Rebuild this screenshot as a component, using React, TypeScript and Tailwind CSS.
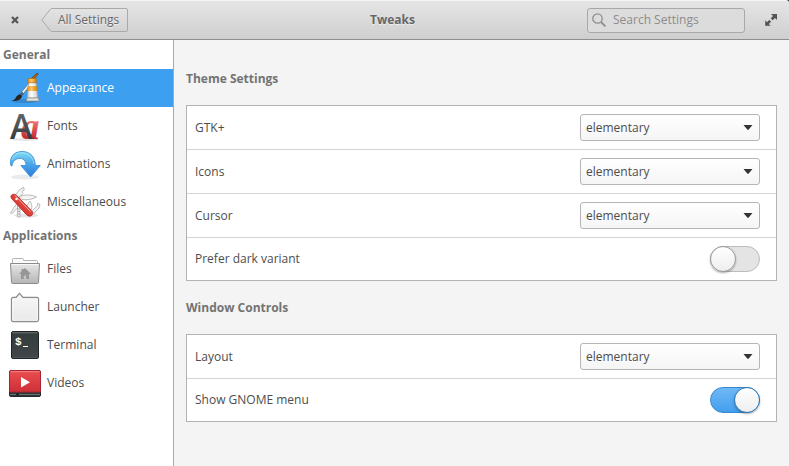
import { useState } from "react";
import type { ReactNode } from "react";

const CHOICES = ["elementary", "Adwaita", "HighContrast"];

function AppearanceIcon() {
  return (
    <svg viewBox="0 0 32 32" className="size-8">
      <defs>
        <linearGradient id="tube" x1="0" x2="1">
          <stop offset="0" stopColor="#d5d5d2" />
          <stop offset="0.4" stopColor="#ffffff" />
          <stop offset="1" stopColor="#c9c9c6" />
        </linearGradient>
        <linearGradient id="cap" x1="0" x2="1">
          <stop offset="0" stopColor="#e08f22" />
          <stop offset="0.4" stopColor="#ffc96b" />
          <stop offset="1" stopColor="#d6800f" />
        </linearGradient>
      </defs>
      <ellipse cx="16" cy="29" rx="14" ry="2" fill="#245f96" opacity="0.35" />
      <path d="M22 7 26.5 2.3q2-1.6 2.3-.8.2.8-.8 2L24 8z" fill="#b76a12" stroke="#6d3c09" strokeWidth="0.9" />
      <path d="m12.5 20 8-9.500 1.500 1.500-7.500 9.500z" fill="#f1f1ef" stroke="#666" strokeWidth="0.7" />
      <path d="M2.500 28.800c4-.5 3.500-3.300 6-5.300l2.500-1.500 2.200 2-1.200 2.200c-1.800 2.300-5 3.100-9.500 2.600z" fill="#29231f" />
      <path d="m11 21.800 2-1.800 2 1.800-1.700 2z" fill="#57616b" />
      <path d="M19.500 10.500h7.500l1.800 15.500h-10.300z" fill="url(#tube)" stroke="#a3a3a0" strokeWidth="0.7" />
      <path d="M18.700 14h9l.6 5h-10z" fill="url(#cap)" />
      <path d="M19 6.500h8.300v4.300h-8.300z" fill="url(#cap)" stroke="#b36a0c" strokeWidth="0.6" />
      <path d="M18 26h11.500l.7 3H17.300z" fill="#e5e5e3" stroke="#858582" strokeWidth="0.7" />
    </svg>
  );
}

function FontsIcon() {
  return (
    <svg viewBox="0 0 32 32" className="size-8 overflow-visible">
      <defs>
        <linearGradient id="script" x1="0" y1="0" x2="0" y2="1">
          <stop offset="0.3" stopColor="#f4827a" />
          <stop offset="0.8" stopColor="#c4282d" />
        </linearGradient>
        <linearGradient id="caps" x1="0" y1="0" x2="0" y2="1">
          <stop offset="0.2" stopColor="#64686a" />
          <stop offset="0.8" stopColor="#34383a" />
        </linearGradient>
      </defs>
      <ellipse cx="16" cy="29.500" rx="14" ry="1.500" fill="#000" opacity="0.1" />
      <text x="12" y="29" fontSize="37" className="font-['Liberation_Serif',serif] font-bold italic" fill="url(#script)">
        a
      </text>
      <text x="1" y="29" fontSize="34" className="font-['Open_Sans',sans-serif] font-semibold" fill="url(#caps)">
        A
      </text>
    </svg>
  );
}

function AnimationsIcon() {
  return (
    <svg viewBox="0 0 32 32" className="size-8">
      <defs>
        <linearGradient id="arrow" x1="0" y1="0" x2="0" y2="1">
          <stop offset="0" stopColor="#80dcf2" />
          <stop offset="0.5" stopColor="#4aa5ea" />
          <stop offset="1" stopColor="#2e78dc" />
        </linearGradient>
      </defs>
      <ellipse cx="16" cy="29" rx="14" ry="2.500" fill="#000" opacity="0.08" />
      <path
        d="M1.500 16.500C.5 8 6 3.500 13 3.500c8.500 0 13 5.500 13.300 14h5L21.600 29 11.800 17.500H17C17 12.500 14 10 10 10.500 6 11 3.500 13.500 3 18c-1 0-1.300-.7-1.500-1.500z"
        fill="url(#arrow)"
        stroke="#3f93d6"
        strokeWidth="0.9"
        strokeLinejoin="round"
      />
      <path d="M3 12C5 6.500 9 4.800 13 4.800c6.500 0 11 4 11.800 11" fill="none" stroke="#b5edfa" opacity="0.6" />
    </svg>
  );
}

function MiscellaneousIcon() {
  return (
    <svg viewBox="0 0 32 32" className="size-8">
      <defs>
        <linearGradient id="knife" x1="1" y1="0" x2="0" y2="1">
          <stop offset="0" stopColor="#f9857a" />
          <stop offset="0.5" stopColor="#df4038" />
          <stop offset="1" stopColor="#b72420" />
        </linearGradient>
      </defs>
      <ellipse cx="17" cy="29.500" rx="12" ry="2" fill="#000" opacity="0.1" />
      <g fill="#f4f4f4" stroke="#ababab" strokeWidth="0.8" strokeLinejoin="round">
        <path d="M5.500 10.500 10 4.200l4.500-3 .8 2.800-2 1 .5 2.500-5 6z" />
        <path d="M10 10.500c5-1.800 12-2.300 17.500.5-4 2.500-10 3.200-14.500 2.500z" />
        <path d="m8 17-6.500 10 1.800.5L11 19z" />
        <path d="M8.500 18.500v12.500h2.500V20z" />
        <path d="M19 23c-1.500-3 0-6 2-8 2 3 2.500 6 1 9z" />
        <path d="M23 25.500c1-3.500 6.500-4 5.500-8l2 .5c1.500 5-3.500 5-5 9.500z" />
      </g>
      <path d="M8.500 23h2.500M8.500 25.500h2.500M8.500 28h2.500" stroke="#999" strokeWidth="0.8" />
      <path
        d="M3 13c-1.500-2-1.500-3.500.2-4.300 1.500-.7 3-.5 4.500.8l15 15.500c1.500 2 1.300 3.500 0 4.500-1.500 1-3.500.8-5-.6z"
        fill="url(#knife)"
        stroke="#a92522"
        strokeWidth="0.8"
      />
      <path d="m6 9.500 15.500 16" stroke="#ffa59b" fill="none" />
      <circle cx="7.500" cy="13" r="1.300" fill="#eee" />
    </svg>
  );
}

function FilesIcon() {
  return (
    <svg viewBox="0 0 32 32" className="size-8">
      <defs>
        <linearGradient id="folder" x1="0" y1="0" x2="0" y2="1">
          <stop offset="0" stopColor="#e6e6e6" />
          <stop offset="1" stopColor="#b5b5b5" />
        </linearGradient>
      </defs>
      <path d="M3.500 12V6.500q0-1 1-1h9q1 0 1 1v1h13q1 0 1 1V12z" fill="#fafafa" stroke="#b3b3b3" />
      <path d="M1.500 10.500h29L29.500 29.500q0 1-1 1h-25q-1 0-1-1z" fill="url(#folder)" stroke="#8b8b8b" />
      <path d="M2.500 11.500h27" stroke="#f6f6f6" />
      <path d="m16 15 6 6h-2v5h-2.800v-3.500h-2.400V26H12v-5h-2l2.500-2.500V16h2v.5z" fill="#969696" />
    </svg>
  );
}

function LauncherIcon() {
  return (
    <svg viewBox="0 0 32 32" className="size-8">
      <defs>
        <linearGradient id="popover" x1="0" y1="0" x2="0" y2="1">
          <stop offset="0" stopColor="#f7f7f7" />
          <stop offset="1" stopColor="#e9e9e9" />
        </linearGradient>
      </defs>
      <path
        d="M4 6.500H7L10.500 2.300 14 6.500H28q1.500 0 1.500 1.500V29q0 1.500-1.500 1.500H4q-1.500 0-1.500-1.500V8q0-1.500 1.500-1.500z"
        fill="url(#popover)"
        stroke="#8d8d8d"
        strokeWidth="1.300"
        strokeLinejoin="round"
      />
      <path d="M3.700 29.300V7.800h4L10.500 4.300l3 3.500h14.800v21.500z" fill="none" stroke="#fff" opacity="0.8" />
    </svg>
  );
}

function TerminalIcon() {
  return (
    <svg viewBox="0 0 32 32" className="size-8">
      <defs>
        <linearGradient id="screen" x1="0" y1="0" x2="0" y2="1">
          <stop offset="0" stopColor="#343b3d" />
          <stop offset="1" stopColor="#414749" />
        </linearGradient>
      </defs>
      <rect x="2.500" y="2.500" width="27" height="27" rx="1.500" fill="url(#screen)" stroke="#1f2425" />
      <path d="M3.500 3.800h25" stroke="#6e7577" />
      <path d="M3.500 28.500h25" stroke="#565d5f" opacity="0.7" />
      <text x="6" y="16" fontSize="11" className="font-['Liberation_Mono',monospace] font-bold" fill="#fff">
        $
      </text>
      <path d="M14 17.500h5" stroke="#fff" />
    </svg>
  );
}

function VideosIcon() {
  return (
    <svg viewBox="0 0 32 32" className="size-8">
      <defs>
        <linearGradient id="video" x1="0" y1="0" x2="0" y2="1">
          <stop offset="0" stopColor="#e94e50" />
          <stop offset="1" stopColor="#cf2f38" />
        </linearGradient>
      </defs>
      <rect x="0.5" y="3.500" width="31" height="26" rx="1.500" fill="#303638" stroke="#25282a" />
      <path d="M.5 25V5q0-1.500 1.500-1.500h28q1.500 0 1.500 1.500v20z" fill="url(#video)" stroke="#a52630" />
      <path d="M1.500 4.700h29" stroke="#f38382" />
      <path d="M12 10v10.500l9-5.250z" fill="#fff" />
      <path d="M1 27.500h30" stroke="#6a7072" />
      <circle cx="8.500" cy="27.500" r="1.200" fill="#15191a" />
    </svg>
  );
}

const sections = [
  {
    title: "General",
    items: [
      { name: "Appearance", icon: <AppearanceIcon /> },
      { name: "Fonts", icon: <FontsIcon /> },
      { name: "Animations", icon: <AnimationsIcon /> },
      { name: "Miscellaneous", icon: <MiscellaneousIcon /> },
    ],
  },
  {
    title: "Applications",
    items: [
      { name: "Files", icon: <FilesIcon /> },
      { name: "Launcher", icon: <LauncherIcon /> },
      { name: "Terminal", icon: <TerminalIcon /> },
      { name: "Videos", icon: <VideosIcon /> },
    ],
  },
];

function Header() {
  return (
    <header className="bg-[#333]">
      <div className="grid h-10 grid-cols-[1fr_auto_1fr] items-center rounded-tr-[3px] border-t border-b border-t-[#f4f4f4] border-b-[#8e8e8e] bg-linear-to-b from-[#e5e5e5] to-[#cfcfcf] pr-3 pl-2">
        <div className="flex items-center gap-[19px]">
          <button type="button" aria-label="Close" className="flex size-3.5 items-center justify-center">
            <svg viewBox="0 0 8 8" className="size-2">
              <path d="m1 1 6 6M7 1 1 7" stroke="#555" strokeWidth="2.200" />
            </svg>
          </button>
          <button type="button" className="relative h-6 w-[87px] pl-[17px] text-left text-[#666] [text-shadow:0_1px_#eee]">
            <svg viewBox="0 0 87 24" className="absolute inset-0 size-full">
              <defs>
                <linearGradient id="back" x1="0" y1="0" x2="0" y2="1">
                  <stop offset="0" stopColor="#e4e4e4" />
                  <stop offset="1" stopColor="#d2d2d2" />
                </linearGradient>
              </defs>
              <path
                d="M.8 12 9.500 1.200Q10 .5 11 .5H85q1.500 0 1.500 1.500v20q0 1.500-1.500 1.500H11q-1 0-1.500-.7z"
                fill="url(#back)"
                stroke="#a9a9a9"
              />
            </svg>
            <span className="relative">All Settings</span>
          </button>
        </div>
        <h1 className="font-bold text-[#666] [text-shadow:0_1px_#eee]">Tweaks</h1>
        <div className="flex items-center justify-end gap-5">
          <label className="flex h-[25px] w-[158px] items-center gap-[7px] rounded-[3px] border border-[#a8a8a8] bg-[#dcdcdc] pl-1">
            <svg viewBox="0 0 14 14" className="size-3.5 shrink-0">
              <circle cx="5.500" cy="5.500" r="4.700" fill="none" stroke="#8e8e8e" strokeWidth="1.300" />
              <path d="m9 9 4.500 4.500" stroke="#8e8e8e" strokeWidth="1.800" />
            </svg>
            <input
              type="search"
              aria-label="Search Settings"
              placeholder="Search Settings"
              className="w-full min-w-0 bg-transparent outline-none placeholder:text-[#8c8c8c]"
            />
          </label>
          <button type="button" aria-label="Maximize" className="size-3">
            <svg viewBox="0 0 12 12" className="size-3" fill="#555">
              <path d="M6 0h6v6l-2-2-2.300 2.300-2-2L8 2z" />
              <path d="M0 6v6h6l-2-2 2.300-2.300-2-2L2 8z" stroke="#d9d9d9" strokeWidth="0.4" />
            </svg>
          </button>
        </div>
      </div>
    </header>
  );
}

function Sidebar() {
  const [active, setActive] = useState("Appearance");

  return (
    <nav className="w-[174px] shrink-0 border-r border-[#a9a9a9] bg-white">
      {sections.map((section) => (
        <div key={section.title}>
          <h2 className="flex h-[29px] items-center pl-[3px] font-bold text-[#737373]">{section.title}</h2>
          {section.items.map((item) => (
            <button
              key={item.name}
              type="button"
              onClick={() => setActive(item.name)}
              className={
                active === item.name
                  ? "flex h-[38px] w-full items-center gap-1.5 bg-[#3d9fef] pl-[9px] text-white"
                  : "flex h-[38px] w-full items-center gap-1.5 pl-[9px]"
              }
            >
              {item.icon}
              {item.name}
            </button>
          ))}
        </div>
      ))}
    </nav>
  );
}

function Panel({ title, children }: { title: string; children: ReactNode }) {
  return (
    <section>
      <h2 className="font-bold text-[#737373]">{title}</h2>
      <div className="mt-[18px] divide-y divide-[#d4d4d4] border border-[#b3b3b3] bg-white">{children}</div>
    </section>
  );
}

function SelectRow({ label }: { label: string }) {
  return (
    <label className="flex items-center justify-between py-2 pr-4 pl-2">
      {label}
      <span className="relative">
        <select className="h-[27px] w-[180px] appearance-none rounded-[3px] border border-[#b5b5b5] bg-linear-to-b from-white to-[#f5f5f5] pr-6 pl-[5px]">
          {CHOICES.map((choice) => (
            <option key={choice}>{choice}</option>
          ))}
        </select>
        <svg viewBox="0 0 10 5" className="pointer-events-none absolute top-[11px] right-[7px] h-[5px] w-2.5">
          <path d="M.5 0h9L5.700 4.600q-.7.7-1.400 0z" fill="#333" />
        </svg>
      </span>
    </label>
  );
}

function SwitchRow({ label, on = false }: { label: string; on?: boolean }) {
  return (
    <label className="flex items-center justify-between py-2 pr-4 pl-2">
      {label}
      <input
        type="checkbox"
        role="switch"
        defaultChecked={on}
        className="flex h-[26px] w-[50px] appearance-none rounded-full border border-[#bdbdbd] bg-[#e4e4e4] before:-m-px before:size-[26px] before:rounded-full before:border before:border-[#999] before:bg-linear-to-b before:from-white before:to-[#eee] before:shadow-[0_1px_2px_#0005] checked:justify-end checked:border-[#3689d0] checked:bg-linear-to-b checked:from-[#6fb8f5] checked:to-[#429fee] checked:before:border-[#2c76b8]"
      />
    </label>
  );
}

export default function App() {
  return (
    <div className="flex min-h-screen flex-col bg-[#f4f4f4] font-['Open_Sans','Noto_Sans',sans-serif] text-xs text-[#4d4d4d]">
      <Header />
      <div className="flex grow">
        <Sidebar />
        <main className="flex min-w-0 grow flex-col gap-[19px] px-3 pt-[31px] pb-6">
          <Panel title="Theme Settings">
            <SelectRow label="GTK+" />
            <SelectRow label="Icons" />
            <SelectRow label="Cursor" />
            <SwitchRow label="Prefer dark variant" />
          </Panel>
          <Panel title="Window Controls">
            <SelectRow label="Layout" />
            <SwitchRow label="Show GNOME menu" on />
          </Panel>
        </main>
      </div>
    </div>
  );
}
